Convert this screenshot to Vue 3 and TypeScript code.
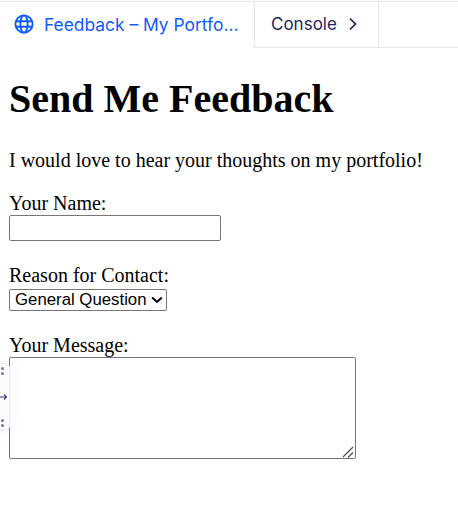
<script setup lang="ts">
import { ref } from 'vue'
const reason = ref('General Question')
const reasons = ['General Question']
</script>

<template>
  <div class="page">
    <nav class="tabs">
      <div class="tab-active">
        <svg class="globe" width="20" height="20" viewBox="0 0 20 20" fill="none" stroke="#0f5cf5" stroke-width="1.9">
          <circle cx="10" cy="10" r="8.6" />
          <ellipse cx="10" cy="10" rx="3.7" ry="8.6" />
          <path d="M1.8 7.2h16.4M1.8 12.8h16.4" />
        </svg>
        <span class="tab-title">Feedback – My Portfolio</span>
      </div>
      <div class="tab-console">
        <span>Console</span>
        <svg width="10" height="14" viewBox="0 0 10 14" fill="none" stroke="#231f5c" stroke-width="1.7">
          <path d="M2 1.5 7.5 7 2 12.5" />
        </svg>
      </div>
      <div class="tab-rest"></div>
    </nav>

    <main class="content">
      <h1>Send Me Feedback</h1>
      <p>I would love to hear your thoughts on my portfolio!</p>
      <form>
        <label for="name">Your Name:</label><br />
        <input id="name" type="text" /><br /><br />
        <label for="reason">Reason for Contact:</label><br />
        <select id="reason" v-model="reason">
          <option v-for="r in reasons" :key="r">{{ r }}</option>
        </select><br /><br />
        <label for="message">Your Message:</label><br />
        <span class="area-wrap">
          <textarea id="message" rows="6" cols="40"></textarea>
          <svg class="grip" width="12" height="12" viewBox="0 0 12 12" fill="none" stroke="#4d4d4d" stroke-width="1.2">
            <path d="M1 11 11 1M6 11.5 11 6.5" />
          </svg>
        </span>
      </form>
    </main>

    <aside class="handle">
      <span class="dots"><i></i><i></i></span>
      <svg class="arrow" width="8" height="8" viewBox="0 0 8 8" fill="none" stroke="#3c3a6e" stroke-width="1.1">
        <path d="M0 4h6.5M4 1.5 6.5 4 4 6.5" />
      </svg>
      <span class="dots"><i></i><i></i></span>
    </aside>
  </div>
</template>

<style>
html, body { margin: 0; background: #fff; }
</style>

<style scoped>
.page {
  position: relative;
  width: 458px;
  height: 507px;
  overflow: hidden;
  font-family: "Liberation Serif", serif;
  font-size: 20px;
  color: #000;
}
.page::before { content: ""; display: table; }
.tabs {
  display: flex;
  height: 47px;
  box-sizing: border-box;
  margin-top: 1px;
  border-top: 1px solid #e6e6e6;
  font-family: "Inter", "Noto Sans", sans-serif;
  font-size: 17px;
}
.tab-active {
  width: 254px;
  box-sizing: border-box;
  display: flex;
  align-items: center;
  gap: 10px;
  padding: 0 0 2px 14px;
  flex: none;
}
.globe { flex: none; }
.tab-title {
  color: #0f5cf5;
  font-size: 17.4px;
  width: 197px;
  overflow: hidden;
  white-space: nowrap;
  text-overflow: ellipsis;
}
.tab-console {
  width: 125px;
  box-sizing: border-box;
  display: flex;
  align-items: center;
  gap: 11px;
  padding: 0 0 2px 16px;
  color: #231f5c;
  border-left: 1px solid #e6e6e6;
  border-right: 1px solid #e6e6e6;
  border-bottom: 1px solid #e6e6e6;
  flex: none;
}
.tab-rest {
  flex: 1;
  border-bottom: 1px solid #e6e6e6;
}
.content {
  padding: 0 9px;
}
h1 {
  font-size: 40px;
  line-height: 46px;
  margin: 28px 0 27px;
}
p {
  margin: 0 0 20px;
  line-height: 23px;
}
form { line-height: 23px; }
input {
  width: 212px;
  height: 26px;
  box-sizing: border-box;
  border: 1px solid #767676;
  border-radius: 2px;
  padding: 1px 2px;
  font-size: 16px;
  vertical-align: baseline;
}
select {
  appearance: none;
  width: 158px;
  height: 22px;
  box-sizing: border-box;
  padding: 0 0 0 5px;
  font-family: "Liberation Sans", sans-serif;
  font-size: 16.8px;
  border: 1px solid #767676;
  border-radius: 2px;
  color: #000;
  background: #fff url("data:image/svg+xml,%3Csvg xmlns='http://www.w3.org/2000/svg' width='12' height='8' viewBox='0 0 12 8'%3E%3Cpath d='M1.2 1.5 6 6l4.8-4.5' fill='none' stroke='%23000' stroke-width='2'/%3E%3C/svg%3E") no-repeat right 3px center;
}
.area-wrap {
  position: relative;
  display: inline-block;
  line-height: 0;
}
textarea {
  width: 347px;
  height: 102px;
  box-sizing: border-box;
  border: 1px solid #767676;
  border-radius: 2px;
  padding: 2px;
  resize: none;
  display: block;
}
.grip {
  position: absolute;
  right: 2px;
  bottom: 1px;
}
.handle {
  position: absolute;
  left: -5px;
  top: 363px;
  width: 15px;
  height: 68px;
  box-sizing: border-box;
  padding: 3px 0 3px 5px;
  display: flex;
  flex-direction: column;
  align-items: flex-start;
  justify-content: space-between;
  background: #fafcff;
  border: 1px solid #e6ebf3;
  border-radius: 5px;
  box-shadow: 0 0 16px rgba(120, 160, 230, 0.12);
}
.arrow { margin-left: -1px; }
.dots {
  display: flex;
  flex-direction: column;
  gap: 2px;
  margin-left: 0;
}
.dots i {
  display: block;
  width: 3px;
  height: 3px;
  border-radius: 50%;
  background: #77759a;
}
</style>
